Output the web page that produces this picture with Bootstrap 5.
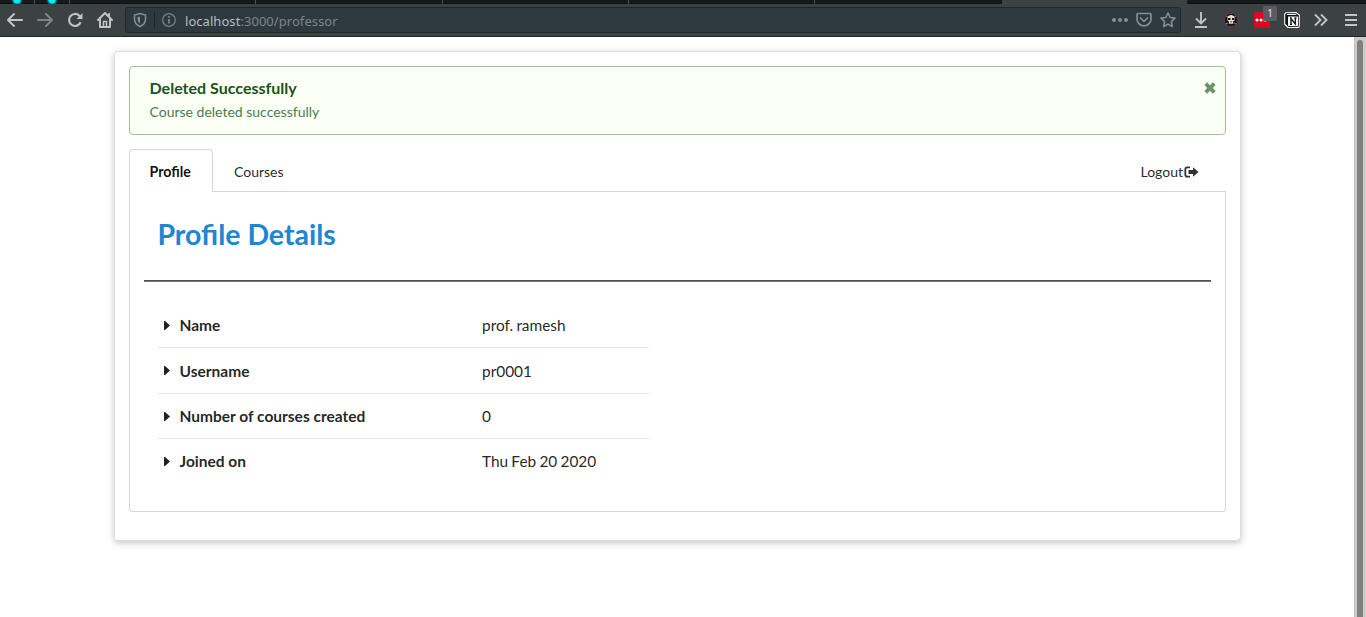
<!DOCTYPE html>
<html lang="en">
<head>
<meta charset="utf-8">
<title>Professor</title>
<link href="https://cdn.jsdelivr.net/npm/bootstrap@5.3.0/dist/css/bootstrap.min.css" rel="stylesheet">
<style>
body{font-family:Lato,"Liberation Sans",sans-serif;font-size:14px;line-height:20px;color:rgba(0,0,0,.87);height:617px;overflow:hidden;background:#fff}
svg{display:block;flex:none}
.tabstrip{height:4px;background:#141a1c;border-bottom:1px solid #0d1213}
.tabstrip div{flex:none;height:4px;border-right:1px solid #4b5254}
.tabstrip .pinned{background:radial-gradient(circle at 50% 0,#00f0ff 0 3px,#087b83 4px,transparent 6px)}
.tabstrip .current{background:#3c4143;border:0}
.toolbar{height:33px;background:#3c4143;border-bottom:1px solid #20282b;color:#c0c5c4}
.urlbar{width:1056px;height:26px;margin-left:11px;background:#2e393f;border:1px solid #20282b;border-radius:3px;color:#7c8486;font:13px/24px "Noto Sans",sans-serif}
.urlbar span{position:static}
.urlbar .address{padding-top:1px;letter-spacing:.05px}
.urlbar b{font-weight:400;color:#b5bdbd}
.url-rule{width:1px;height:18px;background:#20282b}
.ext-count{left:9px;top:-6px;width:14px;height:15px;border-radius:2px;background:#5c5c60;color:#e3e6f0;font:10px/15px "Noto Sans",sans-serif;text-align:center}
.page{height:580px}
.scroll-track{width:12px;background:#cfcbc9;border-left:1px solid #c5c0bc;padding:3px 3px 0 2px}
.scroll-thumb{width:6px;height:590px;background:#7c8180;border-radius:3px 3px 0 0}
.sheet{width:1127px;height:490px;margin:14px 0 0 114px;padding:14px;border:1px solid rgba(34,36,38,.15);border-radius:4px;box-shadow:0 2px 4px rgba(34,36,38,.12),0 2px 10px rgba(34,36,38,.15)}
.notice{height:69px;padding:11px 20px 12px 19.5px;background:#fcfff5;border:1px solid #a3c293;border-radius:4px;color:#2c662d}
.notice h2{font-size:16.05px;line-height:20px;font-weight:700;color:#1a531b;margin:0 0 4px}
.notice p{margin:0;opacity:.85}
.notice .dismiss{margin:4px -11px 0 0}
.tabs{height:43px;margin-top:14px;border-bottom:1px solid #d4d4d5}
.tabs .nav-link{color:rgba(0,0,0,.87);padding:12px 20px 11px;border:1px solid transparent;height:43px;line-height:19px}
.tabs .nav-link.active{color:rgba(0,0,0,.95);font-size:14.2px;font-weight:700;padding-left:19.5px;border-color:#d4d4d5;border-bottom-color:#fff;border-radius:4px 4px 0 0;background:#fff;width:84px}
.panel{height:320px;padding:0 14px;border:1px solid #d4d4d5;border-top:0;border-radius:0 0 4px 4px}
.panel h1{font-size:28.5px;line-height:36px;font-weight:700;color:#2185d0;margin:0;padding:24px 14px 28px 13.4px}
.divider{height:2px;background:linear-gradient(#4c504e 50%,#777977 50%)}
.facts{width:491px;margin:21px 0 0 14px;font-size:15.4px}
.facts>div{height:45px;border-bottom:1px solid #e6e7e7}
.facts>div:nth-child(2){height:46px}
.facts>div:last-child{height:44px;border:0}
.facts dt{width:324px;font-weight:700;font-size:15.5px}
.facts dd{margin:0;word-spacing:-.7px}
.facts svg{margin:0 10px 0 5.500px}
</style>
</head>
<body>
<header>
<div class="tabstrip d-flex">
<div class="pinned" style="width:35px"></div><div class="pinned" style="width:35px"></div><div style="width:186px"></div><div style="width:187px"></div><div style="width:186px"></div><div style="width:186px"></div><div style="width:187px;border:0"></div><div class="current" style="width:185px"></div>
</div>
<div class="toolbar d-flex align-items-center">
<svg width="18" height="18" viewBox="0 0 18 18" fill="none" stroke="currentColor" stroke-width="2" style="margin-left:6px" stroke-linecap="round" stroke-linejoin="round"><path d="M16 9H2m6-6L2 9l6 6"/></svg>
<svg class="opacity-50" width="18" height="18" viewBox="0 0 18 18" fill="none" stroke="currentColor" stroke-width="2" style="margin-left:12px;" stroke-linecap="round" stroke-linejoin="round"><path d="M2 9h14m-6-6 6 6-6 6"/></svg>
<svg width="18" height="18" viewBox="0 0 18 18" fill="none" stroke="currentColor" stroke-width="2.2" style="margin-left:12px"><path d="M14.600 11.300A6 6 0 1 1 13.300 4.700L15 6.500"/><path d="M16.500 2v6h-6z" fill="currentColor" stroke="none"/></svg>
<svg width="18" height="18" viewBox="0 0 18 18" fill="none" stroke="currentColor" stroke-width="2" style="margin-left:12px" stroke-linejoin="round" stroke-linecap="round"><path d="m2 9 7-7 7 7M4 8.500V16h10V8.500M13 3v2"/><path d="M7.500 15.500v-5h3v5" stroke-width="1.500"/></svg>
<div class="urlbar d-flex align-items-center">
<svg width="14" height="16" viewBox="0 0 14 16" fill="none" stroke="#858d8f" stroke-width="1.500" style="margin-left:7px"><path d="M7 1.500 12.500 3v4c0 4-2 6-5.500 7.500C3.500 13 1.500 11 1.500 7V3z"/><path d="M7 4.500v7C5 10 4.500 9 4.500 7V5z" fill="#858d8f" stroke="none"/></svg>
<span class="url-rule" style="margin-left:7px"></span>
<svg width="14" height="14" viewBox="0 0 14 14" fill="none" stroke="#7c8486" stroke-width="1.200" style="margin:0 9px 0 7px"><circle cx="7" cy="7" r="6.300"/><path d="M7 6v4.500M7 3v1.700" stroke-width="1.700"/></svg>
<span class="address"><b>localhost</b>:3000/professor</span>
<svg class="ms-auto" width="18" height="6" viewBox="0 0 18 6" fill="#858d8f"><circle cx="3" cy="3" r="2"/><circle cx="9" cy="3" r="2"/><circle cx="15" cy="3" r="2"/></svg>
<svg width="16" height="16" viewBox="0 0 16 16" fill="none" stroke="#858d8f" stroke-width="1.700" style="margin:0 8px 0 7px" stroke-linecap="round" stroke-linejoin="round"><path d="M2 1.500h12q1 0 1 1V7a7 7 0 0 1-14 0V2.500q0-1 1-1zM4.500 6 8 9.300 11.500 6"/></svg>
<svg width="16" height="16" viewBox="0 0 16 16" fill="none" stroke="#858d8f" stroke-width="1.600" style="margin-right:4px" stroke-linejoin="round"><path d="m8 1 2.100 4.500 4.900.6-3.600 3.400.9 5L8 12.100l-4.300 2.400.9-5L1 6.100l4.900-.6z"/></svg>
</div>
<svg width="14" height="16" viewBox="0 0 14 16" fill="none" stroke="currentColor" stroke-width="1.900" style="margin-left:13px"><path d="M7 0v11M2 6.500l5 5 5-5M1 15h12"/></svg>
<svg width="16" height="16" viewBox="0 0 16 16" style="margin-left:15px"><circle cx="8" cy="8" r="6.700" fill="#17171e" stroke="#702e4b"/><path d="M4.500 4.500q3.500-3 7 0v4l-1.500 1v2.300H6V9.500l-1.500-1z" fill="#e5e1c9"/><path d="M5 6h2.500v2H5zM9 6h2v2H9zM7.500 9h1v1.500h-1z" fill="#17171e"/><path d="m2.500 12 3-1m5 0 3 1M3 4l1.500 1m7 0L13 4" stroke="#85827d"/></svg>
<div class="position-relative" style="margin-left:15px">
<svg width="16" height="16" viewBox="0 0 16 16"><rect width="16" height="16" rx="1" fill="#dc0820"/><g fill="#fff"><circle cx="3" cy="8" r="1.500"/><circle cx="7" cy="8" r="1.500"/><circle cx="11" cy="8" r="1.500"/></g></svg>
<span class="ext-count position-absolute">1</span>
</div>
<svg width="16" height="16" viewBox="0 0 16 16" style="margin-left:14px"><path d="M2 .7 12 .5 15.300 3v11q0 1.400-1.300 1.400L4 15.500.7 12V2z" fill="#111" stroke="#f4f4f2" stroke-width="1.100" stroke-linejoin="round"/><path d="M4 4.500h10V14H4z" fill="#f4f4f2"/><path d="M2 2h9.500l1.500 1H4z" fill="#f4f4f2"/><path d="M7 12V6.500l4.300 5.300V6M6 6h1.500m3 0h2M6 12.300h2" fill="none" stroke="#111" stroke-width="1.300"/></svg>
<svg width="14" height="14" viewBox="0 0 14 14" fill="none" stroke="currentColor" stroke-width="1.900" style="margin-left:14px"><path d="m1 1.500 5.500 5.500L1 12.500M7 1.500 12.500 7 7 12.500"/></svg>
<svg width="12" height="12" viewBox="0 0 12 12" stroke="currentColor" stroke-width="2" style="margin-left:17px"><path d="M0 1h12M0 6h12M0 11h12"/></svg>
</div>
</header>
<div class="page d-flex justify-content-between">
<main class="sheet">
<section class="notice d-flex justify-content-between align-items-start">
<div><h2>Deleted Successfully</h2><p>Course deleted successfully</p></div>
<svg class="dismiss" width="12" height="12" viewBox="0 0 12 12" stroke="#6b936c" stroke-width="3.800"><path d="m1.700 1.700 8.600 8.600m0-8.600-8.600 8.600"/></svg>
</section>
<nav class="tabs nav">
<a class="nav-link active">Profile</a>
<a class="nav-link">Courses</a>
<a class="nav-link ms-auto d-flex" style="padding-right:26px">Logout<svg width="15" height="12" viewBox="0 0 15 12" style="margin:4px 0 0 1px"><path d="M6 1.300H3.500Q1.300 1.300 1.300 3.500v5q0 2.200 2.200 2.200H6" fill="none" stroke="#323232" stroke-width="1.800"/><path d="M9 1.200 14.500 6 9 10.800V8H4.500V4H9z" fill="#323232"/></svg></a>
</nav>
<section class="panel">
<h1>Profile Details</h1>
<div class="divider"></div>
<dl class="facts">
<div class="d-flex align-items-center"><dt class="d-flex align-items-center"><svg width="6" height="9" viewBox="0 0 6 9"><path d="M0 0h1l5 4.500L1 9H0z" fill="#1c2226"/></svg>Name</dt><dd>prof. ramesh</dd></div>
<div class="d-flex align-items-center"><dt class="d-flex align-items-center"><svg width="6" height="9" viewBox="0 0 6 9"><path d="M0 0h1l5 4.500L1 9H0z" fill="#1c2226"/></svg>Username</dt><dd>pr0001</dd></div>
<div class="d-flex align-items-center"><dt class="d-flex align-items-center"><svg width="6" height="9" viewBox="0 0 6 9"><path d="M0 0h1l5 4.500L1 9H0z" fill="#1c2226"/></svg>Number of courses created</dt><dd>0</dd></div>
<div class="d-flex align-items-center"><dt class="d-flex align-items-center"><svg width="6" height="9" viewBox="0 0 6 9"><path d="M0 0h1l5 4.500L1 9H0z" fill="#1c2226"/></svg>Joined on</dt><dd>Thu Feb 20 2020</dd></div>
</dl>
</section>
</main>
<div class="scroll-track"><div class="scroll-thumb"></div></div>
</div>
<script src="https://cdn.jsdelivr.net/npm/bootstrap@5.3.0/dist/js/bootstrap.bundle.min.js"></script>
</body>
</html>
